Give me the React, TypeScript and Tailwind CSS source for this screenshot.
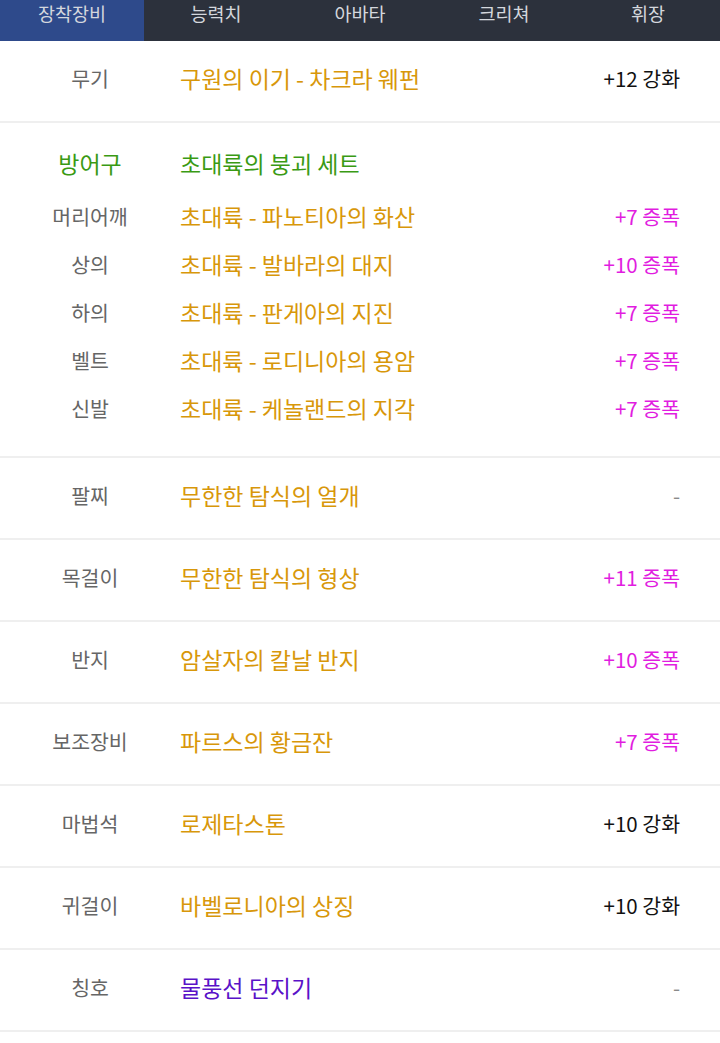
import { useState } from "react";

type Slot = {
    label: string;
    name: string;
    value: string;
    nameColor: string;
    valueColor: string;
};

const ORANGE = "text-[#d8970a]";
const BLACK = "text-[#111111]";
const PINK = "text-[#e11de0]";
const GRAY = "text-[#8a8a8a]";

const tabs = ["장착장비", "능력치", "아바타", "크리쳐", "휘장"];

const armor: Slot[] = [
    { label: "머리어깨", name: "초대륙 - 파노티아의 화산", value: "+7 증폭", nameColor: ORANGE, valueColor: PINK },
    { label: "상의", name: "초대륙 - 발바라의 대지", value: "+10 증폭", nameColor: ORANGE, valueColor: PINK },
    { label: "하의", name: "초대륙 - 판게아의 지진", value: "+7 증폭", nameColor: ORANGE, valueColor: PINK },
    { label: "벨트", name: "초대륙 - 로디니아의 용암", value: "+7 증폭", nameColor: ORANGE, valueColor: PINK },
    { label: "신발", name: "초대륙 - 케놀랜드의 지각", value: "+7 증폭", nameColor: ORANGE, valueColor: PINK },
];

const others: Slot[] = [
    { label: "팔찌", name: "무한한 탐식의 얼개", value: "-", nameColor: ORANGE, valueColor: GRAY },
    { label: "목걸이", name: "무한한 탐식의 형상", value: "+11 증폭", nameColor: ORANGE, valueColor: PINK },
    { label: "반지", name: "암살자의 칼날 반지", value: "+10 증폭", nameColor: ORANGE, valueColor: PINK },
    { label: "보조장비", name: "파르스의 황금잔", value: "+7 증폭", nameColor: ORANGE, valueColor: PINK },
    { label: "마법석", name: "로제타스톤", value: "+10 강화", nameColor: ORANGE, valueColor: BLACK },
    { label: "귀걸이", name: "바벨로니아의 상징", value: "+10 강화", nameColor: ORANGE, valueColor: BLACK },
    { label: "칭호", name: "물풍선 던지기", value: "-", nameColor: "text-[#5a12c8]", valueColor: GRAY },
];

function SlotRow({ slot }: { slot: Slot }) {
    return (
        <div className="flex items-center h-[82px] pb-[6px] border-b-2 border-[#efefef]">
            <div className="w-[180px] text-center text-[20.5px] text-[#666666]">{slot.label}</div>
            <div className={`flex-1 text-[23px] ${slot.nameColor}`}>{slot.name}</div>
            <div className={`pr-10 text-[20.5px] ${slot.valueColor}`}>{slot.value}</div>
        </div>
    );
}

function App() {
    const [active, setActive] = useState(0);

    return (
        <div className="w-[720px] min-h-[1043px] bg-white" style={{ fontFamily: '"Noto Sans CJK KR", "Noto Sans", sans-serif' }}>
            <div className="flex h-[41px] bg-[#2c313c]">
                {tabs.map((tab, i) => (
                    <div
                        key={tab}
                        onClick={() => setActive(i)}
                        className={`flex-1 flex justify-center text-[18.5px] text-[#d4d7dd] cursor-pointer ${i === active ? "bg-[#2e4a8b]" : ""}`}
                    >
                        {tab}
                    </div>
                ))}
            </div>

            <SlotRow slot={{ label: "무기", name: "구원의 이기 - 차크라 웨펀", value: "+12 강화", nameColor: ORANGE, valueColor: BLACK }} />

            <div className="pt-[18px] pb-[24px] border-b-2 border-[#efefef]">
                <div className="flex items-center h-[44px] mb-[7px]">
                    <div className="w-[180px] text-center text-[23px] text-[#3a9a14]">방어구</div>
                    <div className="flex-1 text-[23px] text-[#3a9a14]">초대륙의 붕괴 세트</div>
                </div>
                {armor.map((slot) => (
                    <div key={slot.label} className="flex items-center h-[48px]">
                        <div className="w-[180px] text-center text-[20.5px] text-[#666666]">{slot.label}</div>
                        <div className={`flex-1 text-[23px] ${slot.nameColor}`}>{slot.name}</div>
                        <div className={`pr-10 text-[20.5px] ${slot.valueColor}`}>{slot.value}</div>
                    </div>
                ))}
            </div>

            {others.map((slot) => (
                <SlotRow key={slot.label} slot={slot} />
            ))}
        </div>
    );
}

export default App;
